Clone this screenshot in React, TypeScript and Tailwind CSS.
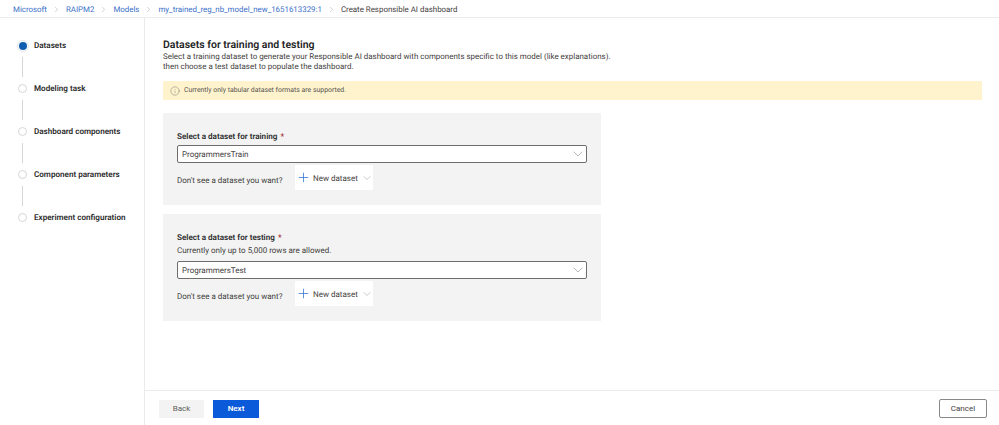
import { ChevronDown, ChevronRight, Plus, Info } from "lucide-react";

const steps = ["Datasets", "Modeling task", "Dashboard components", "Component parameters", "Experiment configuration"];
const crumbs = ["Microsoft", "RAIPM2", "Models", "my_trained_reg_nb_model_new_1651613329:1"];

function DatasetCard({ label, value, hint, className }: { label: string; value: string; hint?: string; className: string }) {
  return (
    <div className={`w-[438px] bg-[#f3f3f3] px-[14px] ${className}`}>
      <div className="flex h-[12px] items-center whitespace-pre text-[8.1px] font-semibold leading-[12px] text-[#2b2b2b]">
        {label} <span className="ml-[1px] text-[#a4262c]">*</span>
      </div>
      {hint && <div className="mt-[2px] h-[12px] text-[8px] leading-[12px] text-[#3f3e3d]">{hint}</div>}
      <div className={`${hint ? "mt-[4px]" : "mt-[3px]"} flex h-[18px] w-[410px] items-center justify-between rounded-[2px] border border-[#6f6d6b] bg-white pl-[4px] text-[8px] text-[#3f3e3d]`}>
        <span className="pt-[1px]">{value}</span>
        <ChevronDown size={16} strokeWidth={0.9} className="text-[#8a8886]" />
      </div>
      <div className="mt-[2px] flex h-[25px] items-center">
        <span className="mt-[6px] w-[118px] shrink-0 whitespace-nowrap text-[8px] text-[#3f3e3d]">Don't see a dataset you want?</span>
        <div className="flex h-[25px] w-[78px] items-center whitespace-nowrap bg-white pl-[1px] text-[8px] text-[#3f3e3d]">
          <Plus size={15} strokeWidth={1.2} className="mr-[2px] shrink-0 text-[#2f6fd0]" />
          <span className="pt-[2px]">New dataset</span>
          <ChevronDown size={12} strokeWidth={0.9} className="ml-[3px] shrink-0 text-[#8a8886]" />
        </div>
      </div>
    </div>
  );
}

export default function App() {
  return (
    <div className="flex h-[425px] w-[999px] flex-col overflow-hidden bg-white font-['Roboto',sans-serif] text-[#242424] [text-rendering:geometricPrecision]">
      <div className="flex h-[18px] items-center border-b border-[#ebebeb] pl-[13px] pt-[2px] text-[7.9px]">
        {crumbs.map((c) => (
          <span key={c} className="flex items-center text-[#3a6fc8]">
            {c}
            <span className="flex w-[19px] justify-center text-[#8a8886]">
              <ChevronRight size={9} strokeWidth={1} />
            </span>
          </span>
        ))}
        <span className="text-[#3f3e3d]">Create Responsible AI dashboard</span>
      </div>
      <div className="flex min-h-0 flex-1">
        <div className="w-[145px] shrink-0 border-r border-[#ebebeb] pl-[18px] pt-[23px]">
          {steps.map((s, i) => (
            <div key={s}>
              <div className="flex h-[9px] items-center">
                {i === 0 ? (
                  <span className="ml-[0.5px] h-[8px] w-[8px] shrink-0 rounded-full bg-[#0f5cb0] outline outline-1 outline-offset-1 outline-[#dfe6f0]" />
                ) : (
                  <span className="h-[9px] w-[9px] shrink-0 rounded-full border border-[#d6d6d6] bg-white" />
                )}
                <span className={`${i === 0 ? "ml-[7.5px]" : "ml-[7px]"} whitespace-nowrap text-[8.1px] font-semibold text-[#2b2b2b]`}>{s}</span>
              </div>
              {i < steps.length - 1 && <div className="my-[7px] ml-[4px] h-[20px] w-px bg-[#d6d6d6]" />}
            </div>
          ))}
        </div>
        <div className="flex min-w-0 flex-1 flex-col">
          <div className="flex-1 pl-[18px] pr-[17px] pt-[20px]">
            <h1 className="text-[10.5px] font-semibold leading-[14px] text-[#242424]">Datasets for training and testing</h1>
            <p className="text-[7.95px] leading-[10px] text-[#3f3e3d]">
              Select a training dataset to generate your Responsible AI dashboard with components specific to this model (like explanations).
            </p>
            <p className="text-[7.95px] leading-[10px] text-[#3f3e3d]">then choose a test dataset to populate the dashboard.</p>
            <div className="mt-[9px] flex h-[19px] items-center bg-[#fff3cd] pl-[7px] text-[6.9px] text-[#55534f]">
              <Info size={10} strokeWidth={1} className="mr-[4px] text-[#605e5c]" />
              Currently only tabular dataset formats are supported.
            </div>
            <DatasetCard label="Select a dataset for training" value="ProgrammersTrain" className="mt-[13px] h-[92px] pt-[17px]" />
            <DatasetCard
              label="Select a dataset for testing"
              hint="Currently only up to 5,000 rows are allowed."
              value="ProgrammersTest"
              className="mt-[9px] h-[107px] pt-[17px]"
            />
          </div>
          <div className="flex h-[35px] items-center justify-between border-t border-[#ebebeb] pl-[14px] pr-[12px]">
            <div className="mt-[1px] flex gap-[9px]">
              <button className="h-[18px] w-[45px] bg-[#f3f3f3] text-[8px] text-[#605e5c]">Back</button>
              <button className="h-[18px] w-[46px] bg-[#0b5ad9] text-[8px] font-semibold text-white">Next</button>
            </div>
            <button className="mt-[1px] h-[19px] w-[48px] rounded-[2px] border border-[#8a8886] bg-white text-[8px] text-[#3f3e3d]">Cancel</button>
          </div>
        </div>
      </div>
    </div>
  );
}
